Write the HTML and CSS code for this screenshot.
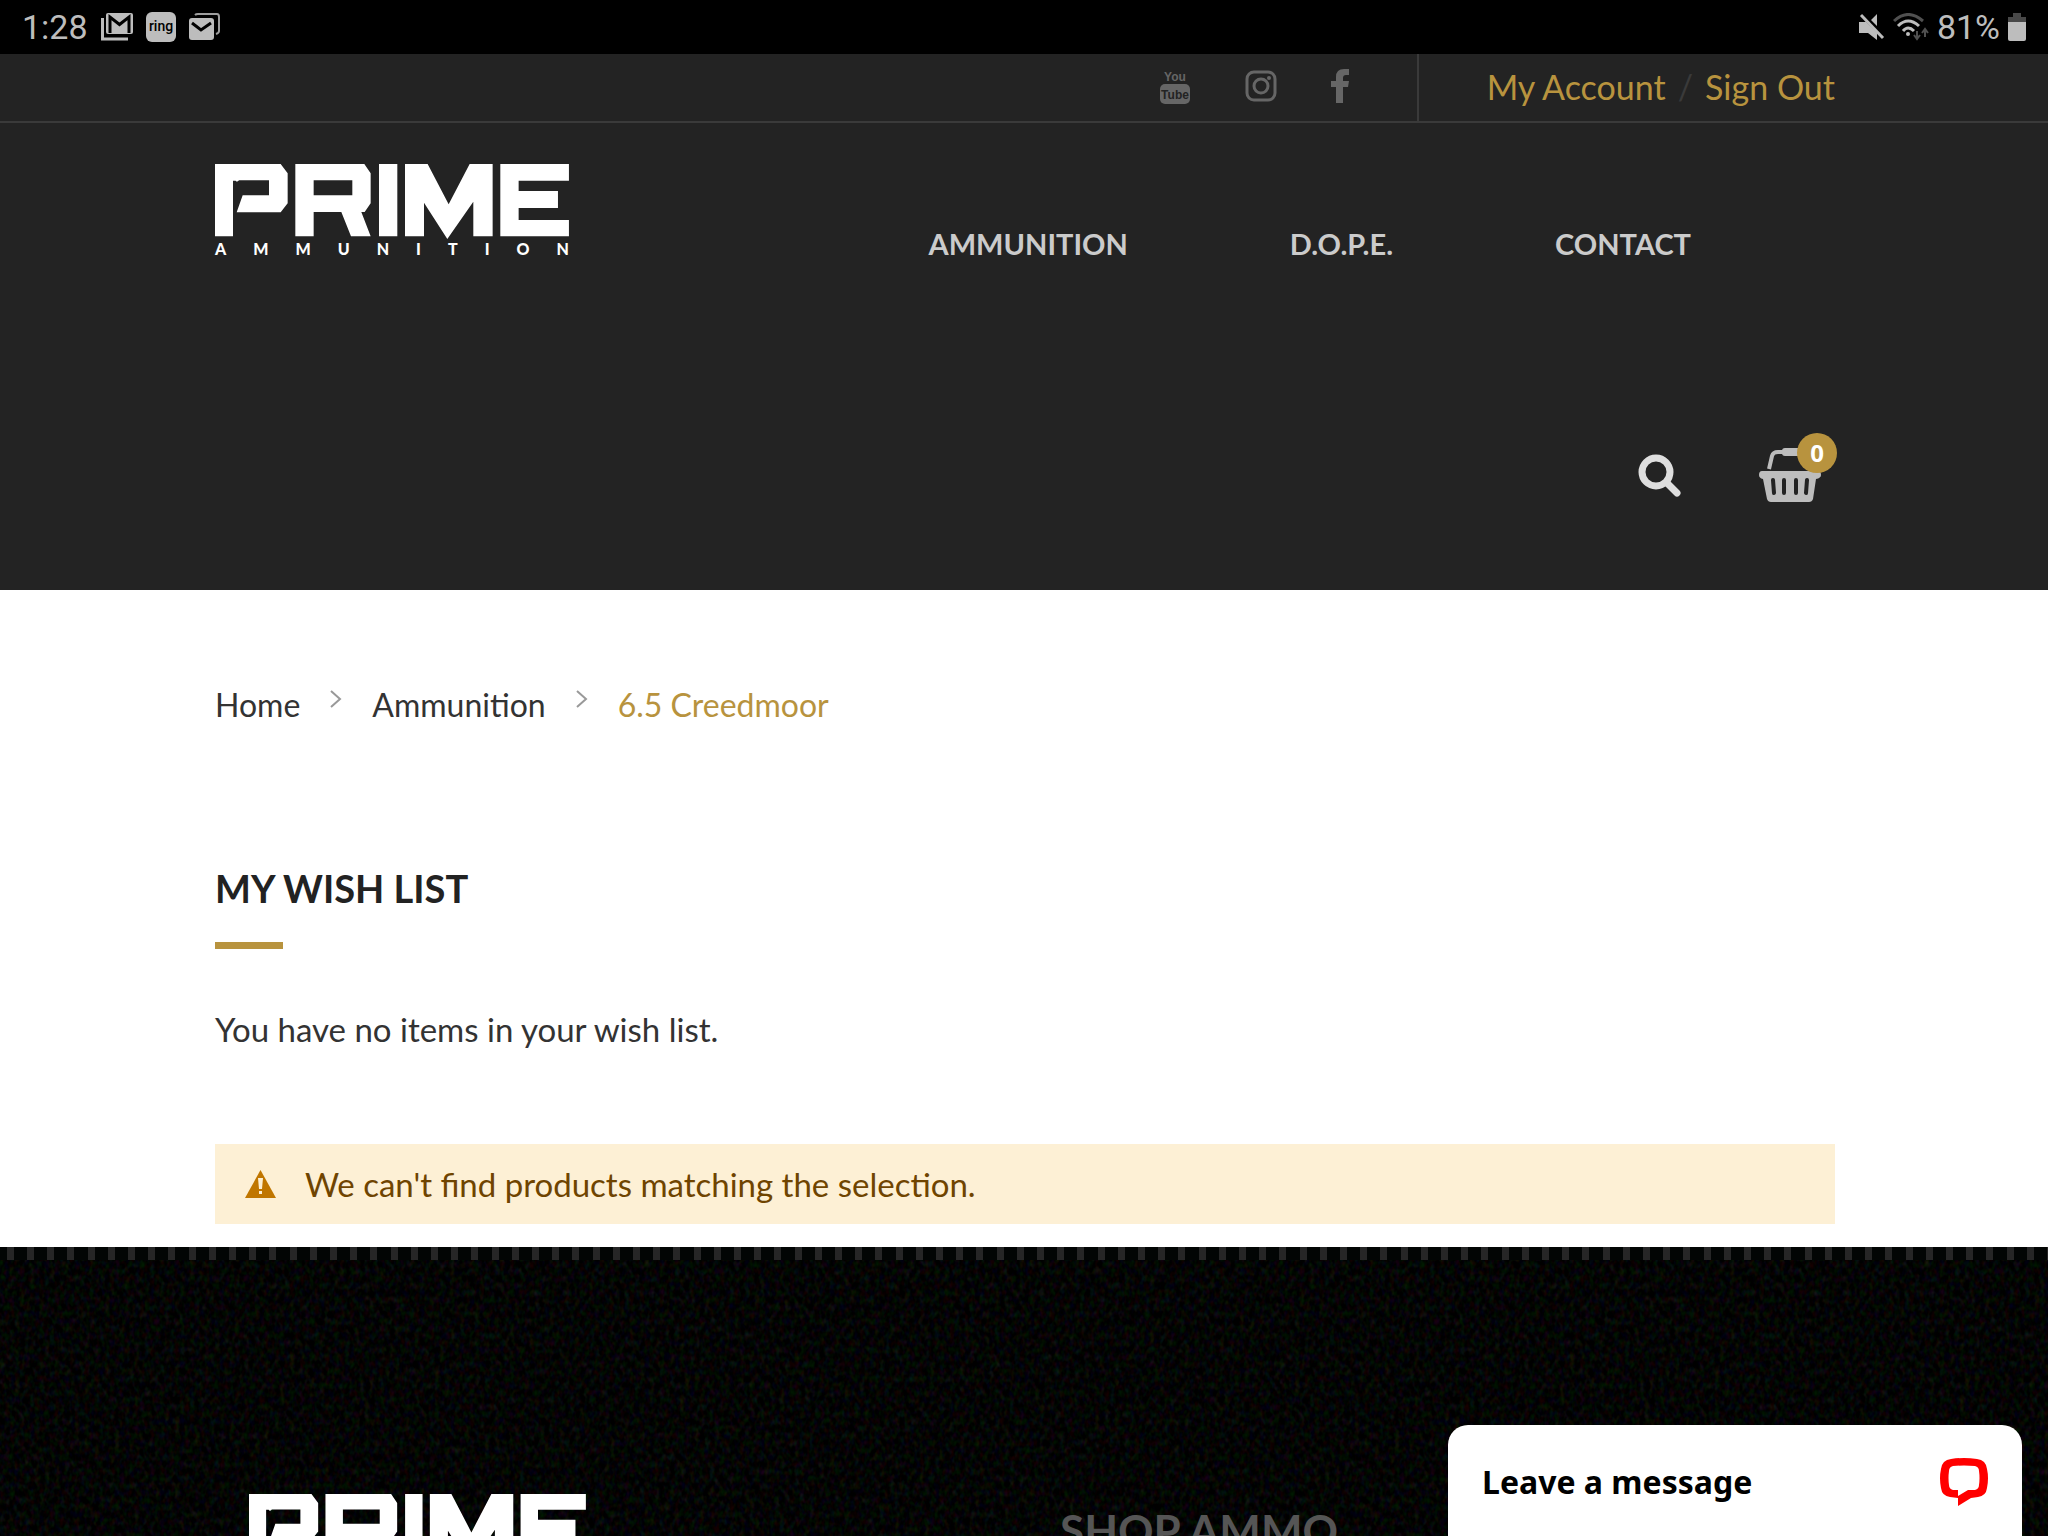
FILE: index.html
```html
<!DOCTYPE html>
<html lang="en">
<head>
  <meta charset="UTF-8">
  <meta name="viewport" content="width=device-width, initial-scale=1.0">
  <title>My Wish List - Prime Ammunition</title>
  <link rel="stylesheet" href="styles.css">
</head>
<body>

<svg class="defs" width="0" height="0" aria-hidden="true">
  <symbol id="prime" viewBox="0 0 1062 226">
    <path fill-rule="evenodd" d="M0 0H197L218 28V118L197 145H65L83 94H162V49H72Q66 56 62 50H54V217H0Z
      M241 0H448L467 28V118L449 144H439L467 217H408L379 144H296V217H241ZM296 49V94H412V49Z
      M492 0H547V217H492Z
      M570 0H638L701 121L764 0H833V217H775V113L697 225L627 116V217H570Z
      M856 0H1062V50H911V81H1029V132H911V168H1062V217H856Z"/>
  </symbol>
</svg>

<div class="status-bar">
  <div class="status-group">
    <span class="status-text">1:28</span>
    <svg width="32" height="28" viewBox="0 0 32 28">
      <path d="M1.500 5V26H27" fill="none" stroke="#bdbdbd" stroke-width="3"/>
      <path d="M7 0H30Q32 0 32 2V19Q32 21 30 21H7Q5 21 5 19V2Q5 0 7 0Z" fill="#bdbdbd"/>
      <path d="M9 20V4L18.500 11.500L28 4V20" fill="none" stroke="#000" stroke-width="3"/>
    </svg>
    <svg width="30" height="30" viewBox="0 0 30 30">
      <rect width="30" height="30" rx="6" fill="#bdbdbd"/>
      <text class="ring-text" x="15" y="19" text-anchor="middle">ring</text>
    </svg>
    <svg width="32" height="28" viewBox="0 0 32 28">
      <path d="M6 2Q7 1 9 1H28Q30 1 30 4V18Q30 20 27 21" fill="none" stroke="#9e9e9e" stroke-width="2"/>
      <rect x="0" y="5" width="25" height="22" rx="3" fill="#bdbdbd"/>
      <path d="M3 10L12 17L22 10" fill="none" stroke="#000" stroke-width="3"/>
    </svg>
  </div>
  <div class="status-group status-right">
    <svg width="26" height="28" viewBox="0 0 26 28">
      <path d="M0 9H7L18 20V27L9 20H0ZM12 7L18 1V13Z" fill="#bdbdbd"/>
      <path d="M2 2L24 25" stroke="#bdbdbd" stroke-width="3"/>
    </svg>
    <svg width="36" height="28" viewBox="0 0 36 28" fill="none">
      <path d="M1 8Q15 -5 30 8" stroke="#505050" stroke-width="3"/>
      <path d="M5 13Q15 3 26 13M10 18Q15 12 21 18" stroke="#bdbdbd" stroke-width="3"/>
      <circle cx="15" cy="21" r="2" fill="#bdbdbd"/>
      <path d="M24 18V26M21 22L24 26L27 22M32 24V16M29 20L32 16L35 20" stroke="#505050" stroke-width="2"/>
    </svg>
    <span class="status-text">81%</span>
    <svg width="18" height="28" viewBox="0 0 18 28">
      <path d="M5 0H13V4H18V9H0V4H5Z" fill="#484848"/>
      <path d="M0 9H18V26Q18 28 16 28H2Q0 28 0 26Z" fill="#bdbdbd"/>
    </svg>
  </div>
</div>

<header class="page-header">
  <div class="top-bar">
    <div class="social">
      <a href="#" aria-label="YouTube">
        <svg width="32" height="38" viewBox="0 0 32 38">
          <text class="you-text" x="16" y="14" text-anchor="middle">You</text>
          <rect x="1" y="17" width="30" height="20" rx="5" fill="#666"/>
          <text class="tube-text" x="16" y="32" text-anchor="middle">Tube</text>
        </svg>
      </a>
      <a href="#" aria-label="Instagram">
        <svg width="32" height="32" viewBox="0 0 32 32" fill="none" stroke="#666" stroke-width="3">
          <rect x="2" y="2" width="28" height="28" rx="7"/>
          <circle cx="16" cy="16" r="7"/>
          <circle cx="24" cy="8" r="2" fill="#666" stroke="none"/>
        </svg>
      </a>
      <a href="#" aria-label="Facebook">
        <svg width="18" height="34" viewBox="0 0 18 34">
          <path d="M18 0V6H15Q12 6 12 9V12H18L17 18H12V34H5V18H0V12H5V8Q5 0 13 0Z" fill="#666"/>
        </svg>
      </a>
    </div>
    <div class="account">
      <a href="#">My Account</a>
      <span class="slash">/</span>
      <a href="#">Sign Out</a>
    </div>
  </div>

  <div class="header-main">
    <a class="logo" href="#" aria-label="Prime Ammunition">
      <svg viewBox="0 0 1062 226"><use href="#prime"/></svg>
      <span class="logo-sub"><span>A</span><span>M</span><span>M</span><span>U</span><span>N</span><span>I</span><span>T</span><span>I</span><span>O</span><span>N</span></span>
    </a>
    <nav class="main-nav">
      <a href="#">AMMUNITION</a>
      <a href="#">D.O.P.E.</a>
      <a href="#">CONTACT</a>
    </nav>
  </div>

  <div class="header-tools">
    <button class="tool" aria-label="Search">
      <svg width="43" height="44" viewBox="0 0 43 44" fill="none" stroke="#dedede">
        <circle cx="18" cy="19" r="14" stroke-width="7"/>
        <path d="M29 30L39 40" stroke-width="7" stroke-linecap="round"/>
      </svg>
    </button>
    <button class="tool cart" aria-label="Cart">
      <svg width="62" height="54" viewBox="0 0 62 54">
        <path d="M10 21L13 8Q14 4 19 4H25" fill="none" stroke="#bdbdbd" stroke-width="4"/>
        <rect x="23" y="0" width="22" height="8" rx="3" fill="#bdbdbd"/>
        <path d="M3 23H59Q62 23 62 27Q62 30 57 31L54 51Q53 54 50 54H12Q9 54 8 51L4 31Q0 30 0 27Q0 23 3 23Z" fill="#bdbdbd"/>
        <path d="M14 32L15 45M25 32V45M37 32V45M48 32L47 45" stroke="#232323" stroke-width="4" stroke-linecap="round"/>
      </svg>
      <span class="badge">0</span>
    </button>
  </div>
</header>

<main class="page-main">
  <nav class="breadcrumbs">
    <a href="#">Home</a>
    <svg width="12" height="18" viewBox="0 0 12 18"><path d="M1 1L10 9L1 17"/></svg>
    <a href="#">Ammunition</a>
    <svg width="12" height="18" viewBox="0 0 12 18"><path d="M1 1L10 9L1 17"/></svg>
    <span class="current">6.5 Creedmoor</span>
  </nav>

  <h1>MY WISH LIST</h1>
  <p class="empty">You have no items in your wish list.</p>

  <div class="notice">
    <svg width="31" height="28" viewBox="0 0 31 28">
      <path d="M15.500 0L31 28H0Z" fill="#c07600"/>
      <path d="M13 8H18L17 19H14ZM14 21H17V24H14Z" fill="#fdf0d5"/>
    </svg>
    <span>We can't find products matching the selection.</span>
  </div>
</main>

<footer class="page-footer">
  <svg class="grain" width="100%" height="100%" aria-hidden="true">
    <filter id="noise" color-interpolation-filters="sRGB">
      <feTurbulence type="fractalNoise" baseFrequency="0.2 0.14" numOctaves="2" seed="4"/>
      <feColorMatrix values="0.22 0 0 0 -0.1  0 0.22 0 0 -0.095  0 0 0.22 0 -0.1  0 0 0 0 1"/>
    </filter>
    <rect width="100%" height="100%" filter="url(#noise)"/>
  </svg>
  <div class="footer-cols">
    <a class="footer-logo" href="#" aria-label="Prime Ammunition">
      <svg viewBox="0 0 1062 226"><use href="#prime"/></svg>
    </a>
    <h2>SHOP AMMO</h2>
  </div>
</footer>

<button class="chat">
  <span>Leave a message</span>
  <svg width="48" height="48" viewBox="0 0 48 48">
    <path fill-rule="evenodd" fill="#f00" d="M11 1Q24 -1 37 1Q46 2 47 11Q49 20 47 30Q46 38 38 39L31 40L18 48V40L10 39Q2 38 1 30Q-1 20 1 11Q2 2 11 1ZM13 8Q9 9 9 13Q8 20 9 27Q9 31 13 32L18 32V38L28 32L35 32Q39 31 39 27Q40 20 39 13Q39 9 35 8Q24 7 13 8Z"/>
  </svg>
</button>

</body>
</html>
```

FILE: styles.css
```css
* {
  box-sizing: border-box;
}

body {
  margin: 0;
  height: 100vh;
  overflow: hidden;
  display: flex;
  flex-direction: column;
  background: #fff;
  color: #333;
  font-family: Lato, "Liberation Sans", sans-serif;
  font-weight: 400;
  font-size: 33px;
  line-height: 40px;
}

a {
  color: inherit;
  text-decoration: none;
}

svg {
  display: block;
  flex: none;
}

button {
  border: none;
  padding: 0;
  cursor: pointer;
}

.defs {
  position: absolute;
}

/* android status bar */
.status-bar {
  display: flex;
  justify-content: space-between;
  align-items: center;
  height: 54px;
  flex: none;
  padding: 0 22px;
  background: #000;
}

.status-group {
  display: flex;
  align-items: center;
  gap: 13px;
}

.status-right {
  gap: 8px;
}

.status-text {
  color: #bdbdbd;
  font-family: Roboto, sans-serif;
  font-weight: 400;
  font-size: 34px;
}

.ring-text {
  font: 500 14px Roboto, sans-serif;
  fill: #000;
}

/* header */
.page-header {
  flex: none;
  height: 536px;
  background: #232323;
}

.top-bar {
  display: flex;
  justify-content: flex-end;
  height: 69px;
  padding-right: 213px;
  border-bottom: 2px solid #3a3a3a;
}

.social {
  display: flex;
  align-items: center;
  gap: 54px;
  padding-right: 68px;
  padding-bottom: 4px;
}

.you-text,
.tube-text {
  font: bold 12px "Liberation Sans", sans-serif;
  fill: #666;
}

.tube-text {
  fill: #232323;
}

.account {
  display: flex;
  align-items: center;
  gap: 12px;
  padding-left: 68px;
  padding-bottom: 2px;
  border-left: 2px solid #3a3a3a;
  color: #b8933e;
  font-size: 34px;
}

.slash {
  color: #3a3a3a;
}

.header-main {
  display: flex;
  justify-content: space-between;
  padding: 41px 357px 0 215px;
}

.logo {
  width: 354px;
  fill: #fff;
}

.logo-sub {
  display: flex;
  justify-content: space-between;
  color: #fff;
  font-size: 16px;
  font-weight: 900;
  line-height: 20px;
}

.main-nav {
  display: flex;
  gap: 162px;
  padding-top: 60px;
  color: #cbcbcb;
  font-size: 29px;
  font-weight: 700;
}

.header-tools {
  display: flex;
  justify-content: flex-end;
  align-items: center;
  gap: 78px;
  padding: 184px 227px 0 0;
}

.tool {
  position: relative;
  background: none;
}

.badge {
  position: absolute;
  top: -15px;
  right: -16px;
  width: 40px;
  height: 40px;
  border-radius: 50%;
  background: #b8933e;
  color: #fff;
  font: bold 24px/40px "Open Sans", sans-serif;
}

/* content */
.page-main {
  padding: 95px 213px 23px 215px;
}

.breadcrumbs {
  display: flex;
  align-items: center;
  gap: 30px;
  font-size: 32px;
}

.breadcrumbs svg {
  fill: none;
  stroke: #999;
  stroke-width: 2;
  margin-bottom: 12px;
}

.current {
  color: #b8933e;
}

h1 {
  margin: 138px 0 60px;
  color: #222;
  font-size: 38px;
  font-weight: 700;
  line-height: 50px;
}

h1::after {
  content: "";
  display: block;
  width: 68px;
  height: 7px;
  margin-top: 29px;
  background: #b8933e;
}

.empty {
  margin: 0 0 95px;
}

.notice {
  display: flex;
  align-items: center;
  gap: 29px;
  height: 80px;
  padding: 0 30px;
  background: #fdf0d5;
  color: #6f4400;
}

/* footer */
.page-footer {
  position: relative;
  flex: 1;
  overflow: hidden;
  background: #000;
}

.page-footer::before {
  content: "";
  position: absolute;
  inset: 0 0 auto;
  z-index: 1;
  height: 13px;
  background: linear-gradient(90deg,
    #020504 7px, #262626 7px 14px, #020504 14px 27px, #262626 27px 34px,
    #020504 34px 47px, #262626 47px 54px, #020504 54px 67px, #262626 67px 74px,
    #020504 74px 88px, #262626 88px 95px, #020504 95px) 0 0 / 101px 13px;
}

.grain {
  position: absolute;
  inset: 0;
}

.footer-cols {
  position: relative;
  display: grid;
  grid-template-columns: 811px 1fr;
  padding: 247px 213px 0 249px;
}

.footer-logo {
  width: 337px;
  fill: #fff;
}

.page-footer h2 {
  margin: 12px 0 0;
  color: #555;
  font-size: 44px;
  font-weight: 700;
  line-height: 48px;
}

/* chat widget */
.chat {
  position: fixed;
  right: 26px;
  bottom: 0;
  display: flex;
  justify-content: space-between;
  align-items: center;
  width: 574px;
  height: 111px;
  padding: 2px 34px 0;
  border-radius: 20px 20px 0 0;
  background: #fff;
  color: #000;
  font: bold 32px "Noto Sans", sans-serif;
}
```
